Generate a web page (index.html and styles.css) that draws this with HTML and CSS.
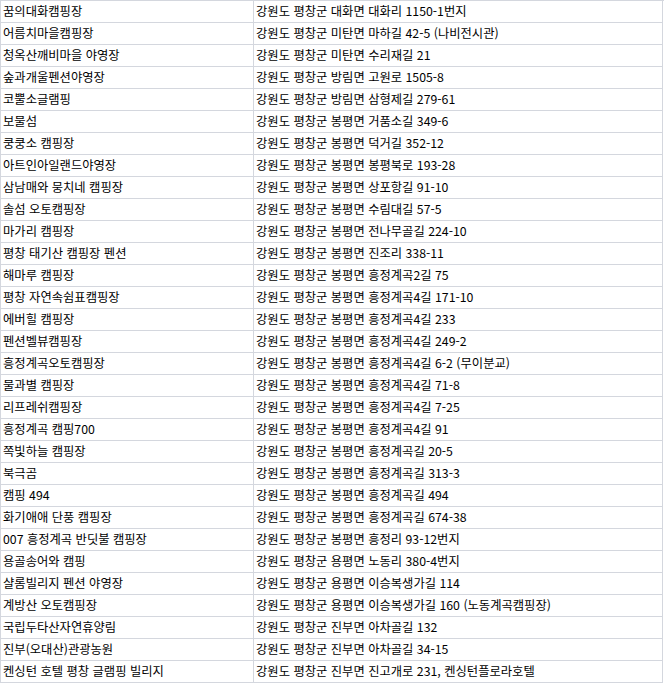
FILE: index.html
```html
<!DOCTYPE html>
<html lang="ko">
<head>
<meta charset="utf-8">
<link rel="stylesheet" href="styles.css">
</head>
<body>
<div class="sheet">
<div class="cell">꿈의대화캠핑장</div><div class="cell">강원도 평창군 대화면 대화리 1150-1번지</div>
<div class="cell">어름치마을캠핑장</div><div class="cell">강원도 평창군 미탄면 마하길 42-5 (나비전시관)</div>
<div class="cell">청옥산깨비마을 야영장</div><div class="cell">강원도 평창군 미탄면 수리재길 21</div>
<div class="cell">숲과개울펜션야영장</div><div class="cell">강원도 평창군 방림면 고원로 1505-8</div>
<div class="cell">코뿔소글램핑</div><div class="cell">강원도 평창군 방림면 삼형제길 279-61</div>
<div class="cell">보물섬</div><div class="cell">강원도 평창군 봉평면 거품소길 349-6</div>
<div class="cell">쿵쿵소 캠핑장</div><div class="cell">강원도 평창군 봉평면 덕거길 352-12</div>
<div class="cell">아트인아일랜드야영장</div><div class="cell">강원도 평창군 봉평면 봉평북로 193-28</div>
<div class="cell">삼남매와 뭉치네 캠핑장</div><div class="cell">강원도 평창군 봉평면 상포항길 91-10</div>
<div class="cell">솔섬 오토캠핑장</div><div class="cell">강원도 평창군 봉평면 수림대길 57-5</div>
<div class="cell">마가리 캠핑장</div><div class="cell">강원도 평창군 봉평면 전나무골길 224-10</div>
<div class="cell">평창 태기산 캠핑장 펜션</div><div class="cell">강원도 평창군 봉평면 진조리 338-11</div>
<div class="cell">해마루 캠핑장</div><div class="cell">강원도 평창군 봉평면 흥정계곡2길 75</div>
<div class="cell">평창 자연속쉼표캠핑장</div><div class="cell">강원도 평창군 봉평면 흥정계곡4길 171-10</div>
<div class="cell">에버힐 캠핑장</div><div class="cell">강원도 평창군 봉평면 흥정계곡4길 233</div>
<div class="cell">펜션벨뷰캠핑장</div><div class="cell">강원도 평창군 봉평면 흥정계곡4길 249-2</div>
<div class="cell">흥정계곡오토캠핑장</div><div class="cell">강원도 평창군 봉평면 흥정계곡4길 6-2 (무이분교)</div>
<div class="cell">물과별 캠핑장</div><div class="cell">강원도 평창군 봉평면 흥정계곡4길 71-8</div>
<div class="cell">리프레쉬캠핑장</div><div class="cell">강원도 평창군 봉평면 흥정계곡4길 7-25</div>
<div class="cell">흥정계곡 캠핑700</div><div class="cell">강원도 평창군 봉평면 흥정계곡4길 91</div>
<div class="cell">쪽빛하늘 캠핑장</div><div class="cell">강원도 평창군 봉평면 흥정계곡길 20-5</div>
<div class="cell">북극곰</div><div class="cell">강원도 평창군 봉평면 흥정계곡길 313-3</div>
<div class="cell">캠핑 494</div><div class="cell">강원도 평창군 봉평면 흥정계곡길 494</div>
<div class="cell">화기애애 단풍 캠핑장</div><div class="cell">강원도 평창군 봉평면 흥정계곡길 674-38</div>
<div class="cell">007 흥정계곡 반딧불 캠핑장</div><div class="cell">강원도 평창군 봉평면 흥정리 93-12번지</div>
<div class="cell">용골송어와 캠핑</div><div class="cell">강원도 평창군 용평면 노동리 380-4번지</div>
<div class="cell">샬롬빌리지 펜션 야영장</div><div class="cell">강원도 평창군 용평면 이승복생가길 114</div>
<div class="cell">계방산 오토캠핑장</div><div class="cell">강원도 평창군 용평면 이승복생가길 160 (노동계곡캠핑장)</div>
<div class="cell">국립두타산자연휴양림</div><div class="cell">강원도 평창군 진부면 아차골길 132</div>
<div class="cell">진부(오대산)관광농원</div><div class="cell">강원도 평창군 진부면 아차골길 34-15</div>
<div class="cell">켄싱턴 호텔 평창 글램핑 빌리지</div><div class="cell">강원도 평창군 진부면 진고개로 231, 켄싱턴플로라호텔</div>
</div>
</body>
</html>
```

FILE: styles.css
```css
html, body {
  margin: 0;
  padding: 0;
  background: #ffffff;
}

.sheet {
  display: grid;
  grid-template-columns: 253px 409px;
  grid-auto-rows: 22px;
  width: 663px;
  border-top: 1px solid #d4d7de;
  border-left: 1px solid #d4d7de;
  font-family: "Noto Sans CJK KR", "Noto Sans", sans-serif;
  font-size: 12.3px;
  font-weight: 400;
  color: #000000;
}

.cell {
  box-sizing: border-box;
  border-right: 1px solid #d4d7de;
  border-bottom: 1px solid #d4d7de;
  padding: 0 0 0 2px;
  line-height: 21px;
  white-space: nowrap;
  overflow: hidden;
}
```
